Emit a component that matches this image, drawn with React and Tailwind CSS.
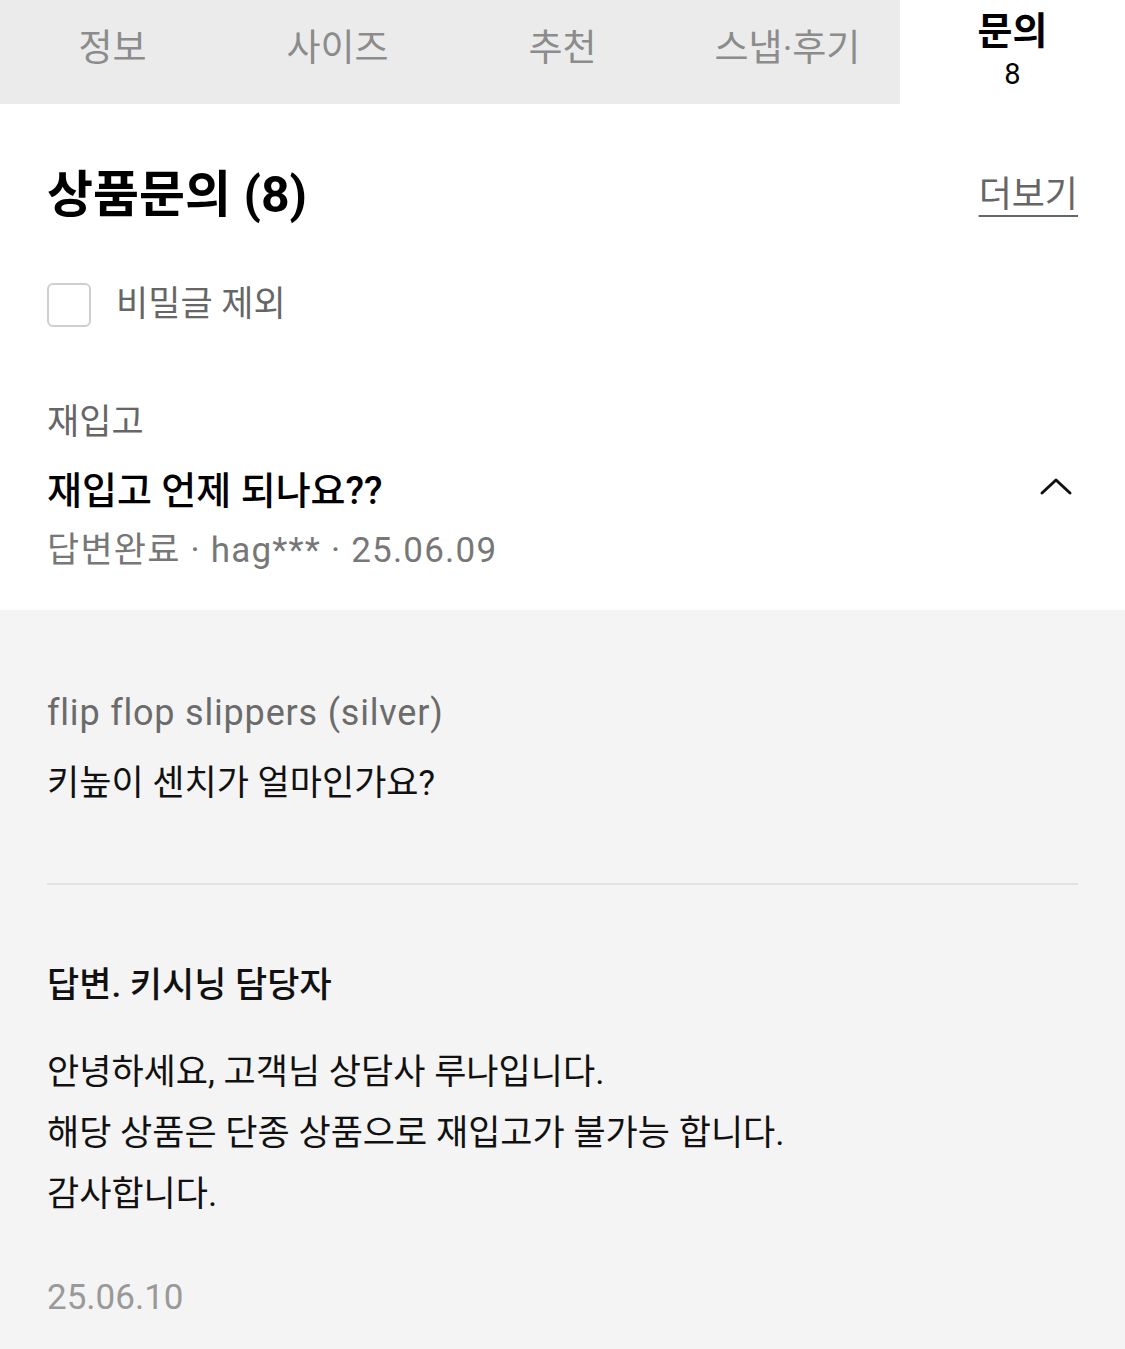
import React from "react";

const font = { fontFamily: "Roboto, 'Noto Sans CJK KR', sans-serif" };

export default function App() {
  const tabs = ["정보", "사이즈", "추천", "스냅·후기"];
  return (
    <div className="w-[1125px] min-h-[1349px] bg-white" style={font}>
      <div className="grid grid-cols-5 h-[104px] bg-[#ebebeb]">
        {tabs.map((t) => (
          <div key={t} className="flex items-center justify-center pb-[8px] text-[37px] text-[#8c8c8c] leading-none">
            {t}
          </div>
        ))}
        <div className="flex flex-col items-center justify-start bg-white pt-[9px]">
          <div className="text-[38px] font-bold text-black leading-[44px]">문의</div>
          <div className="text-[29px] text-black leading-[32px] mt-[5px]">8</div>
        </div>
      </div>

      <div className="px-[47px]">
        <div className="mt-[63px] flex items-center justify-between h-[56px]">
          <div className="text-[50px] font-bold text-black leading-[56px]">상품문의 (8)</div>
          <div className="text-[36px] text-[#666] underline underline-offset-[8px] decoration-[2px] leading-[44px]">더보기</div>
        </div>

        <div className="mt-[60px] flex items-center h-[44px]">
          <div className="w-[44px] h-[44px] rounded-[6px] border-[2px] border-[#cfcfcf] bg-white"></div>
          <div className="ml-[25px] text-[35px] text-[#666] leading-[44px]">비밀글 제외</div>
        </div>

        <div className="mt-[74px] text-[35px] text-[#666] leading-[44px]">재입고</div>
        <div className="mt-[22px] flex items-center justify-between h-[48px]">
          <div className="text-[38px] font-medium text-black leading-[48px]">재입고 언제 되나요??</div>
          <svg width="34" height="20" viewBox="0 0 34 20" className="mr-[5px] mb-[10px]">
            <path d="M3 17 L17 4 L31 17" fill="none" stroke="#111" strokeWidth="3" strokeLinecap="round" strokeLinejoin="round" />
          </svg>
        </div>
        <div className="mt-[14px] text-[35px] text-[#777] leading-[44px] pb-[37px] tracking-[1.2px]">답변완료 · hag*** · 25.06.09</div>
      </div>

      <div className="bg-[#f4f4f4] px-[47px] pt-[81px] pb-[31px]">
        <div className="text-[36px] text-[#6b6b6b] leading-[44px] tracking-[0.8px]">flip flop slippers (silver)</div>
        <div className="mt-[27px] text-[35px] text-[#111] leading-[44px]">키높이 센치가 얼마인가요?</div>
        <div className="mt-[77px] h-[2px] bg-[#e3e3e3]"></div>
        <div className="mt-[79px] text-[35px] font-medium text-[#111] leading-[44px]">답변. 키시닝 담당자</div>
        <div className="mt-[34px] text-[35px] text-[#111] leading-[61px]">
          <div>안녕하세요, 고객님 상담사 루나입니다.</div>
          <div>해당 상품은 단종 상품으로 재입고가 불가능 합니다.</div>
          <div>감사합니다.</div>
        </div>
        <div className="mt-[51px] text-[35px] text-[#999] leading-[44px]">25.06.10</div>
      </div>
    </div>
  );
}
